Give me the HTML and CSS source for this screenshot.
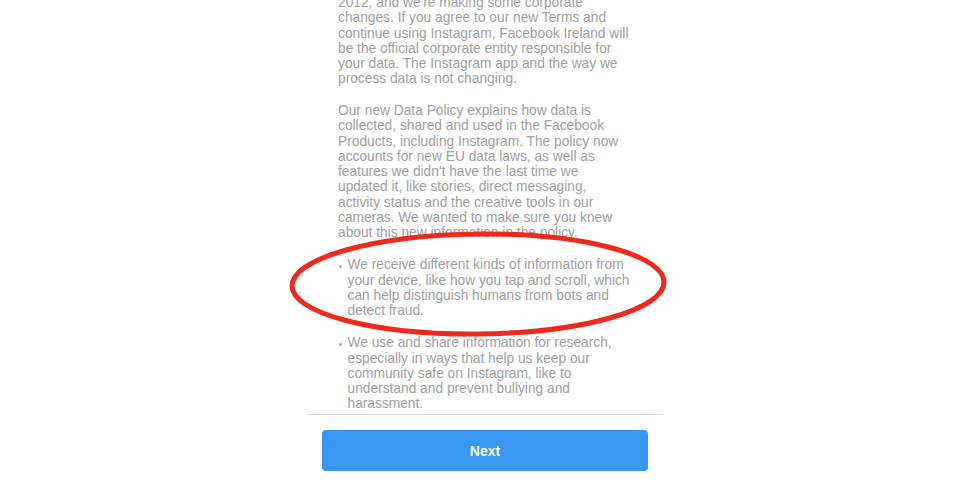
FILE: index.html
```html
<!DOCTYPE html>
<html lang="en">
<head>
    <meta charset="UTF-8">
    <meta name="viewport" content="width=device-width, initial-scale=1.0">
    <title>Terms and Data Policy</title>
    <link rel="stylesheet" href="styles.css">
</head>
<body>
    <div class="screen">
        <div class="scroll">
            <div class="content">
                <p>2012, and we're making some corporate<br>
                changes. If you agree to our new Terms and<br>
                continue using Instagram, Facebook Ireland will<br>
                be the official corporate entity responsible for<br>
                your data. The Instagram app and the way we<br>
                process data is not changing.</p>

                <p>Our new Data Policy explains how data is<br>
                collected, shared and used in the Facebook<br>
                Products, including Instagram. The policy now<br>
                accounts for new EU data laws, as well as<br>
                features we didn't have the last time we<br>
                updated it, like stories, direct messaging,<br>
                activity status and the creative tools in our<br>
                cameras. We wanted to make sure you knew<br>
                about this new information in the policy.</p>

                <ul class="points">
                    <li><span class="dot"></span><span>We receive different kinds of information from<br>
                    your device, like how you tap and scroll, which<br>
                    can help distinguish humans from bots and<br>
                    detect fraud.</span></li>
                    <li><span class="dot"></span><span>We use and share information for research,<br>
                    especially in ways that help us keep our<br>
                    community safe on Instagram, like to<br>
                    understand and prevent bullying and<br>
                    harassment.</span></li>
                </ul>
            </div>
        </div>
        <div class="footer">
            <button class="next">Next</button>
        </div>
    </div>

    <svg class="markup" width="960" height="500" viewBox="0 0 960 500">
        <ellipse cx="478" cy="284" rx="186" ry="50" fill="none" stroke="#ef2a1b" stroke-width="5" transform="rotate(-0.6 478 284)"/>
    </svg>
</body>
</html>
```

FILE: styles.css
```css
body {
    margin: 0;
    background: #fff;
    font-family: "Liberation Sans", Arial, sans-serif;
}
.screen {
    width: 356px;
    margin-left: 307px;
}
.scroll {
    height: 414px;
    overflow: hidden;
}
.content {
    margin-top: -5px;
    padding-left: 31px;
    color: #a0a0a0;
    font-size: 13.75px;
    line-height: 15.25px;
    white-space: nowrap;
}
.content p {
    margin: 0 0 16.5px;
}
.points {
    list-style: none;
    margin: 17px 0 0;
    padding: 0;
}
.points li {
    display: flex;
    margin-bottom: 17px;
}
.dot {
    width: 3px;
    height: 3px;
    border-radius: 50%;
    background: #a8a8a8;
    margin: 8px 6px 0 0.5px;
    flex-shrink: 0;
}
.footer {
    border-top: 1px solid #dedede;
    padding: 15px 15px;
}
.next {
    display: block;
    width: 100%;
    height: 41px;
    border: none;
    border-radius: 4px;
    background: #3897f0;
    color: #fff;
    font-family: "Liberation Sans", Arial, sans-serif;
    font-size: 14px;
    font-weight: bold;
}
.markup {
    position: absolute;
    top: 0;
    left: 0;
    pointer-events: none;
}
```
